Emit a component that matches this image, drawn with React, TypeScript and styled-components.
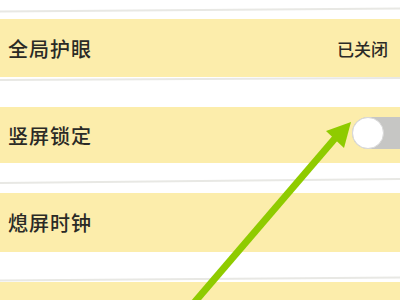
import React from "react"
import styled, { createGlobalStyle } from "styled-components"

const GlobalStyle = createGlobalStyle`
	html, body {
		margin: 0;
		padding: 0;
		background: #ffffff;
		font-family: "Noto Sans CJK SC", "Noto Sans", sans-serif;
	}
`

type Setting = {
	label: string
	height: number
	status?: string
	toggle?: boolean
}

const settings: Setting[] = [
	{ label: "全局护眼", height: 58, status: "已关闭" },
	{ label: "竖屏锁定", height: 56, toggle: true },
	{ label: "熄屏时钟", height: 59 },
	{ label: "", height: 30 },
]

const Page = styled.div`
	position: relative;
	width: 400px;
	height: 300px;
	overflow: hidden;
	background: #ffffff;
`

const Gap = styled.div<{ $h: number; $line: number; $tilt: number }>`
	position: relative;
	height: ${(p) => p.$h}px;
	&::after {
		content: "";
		position: absolute;
		left: -10px;
		right: -10px;
		top: ${(p) => p.$line}px;
		height: 2px;
		background: #e8e8e4;
		transform: rotate(${(p) => p.$tilt}deg);
	}
`

const Row = styled.div<{ $h: number }>`
	display: flex;
	align-items: center;
	justify-content: space-between;
	height: ${(p) => p.$h}px;
	padding: 0 0 0 8px;
	background: #fcedab;
`

const Label = styled.span`
	font-size: 20px;
	font-weight: 500;
	color: #2a2a26;
	letter-spacing: 1px;
`

const Status = styled.span`
	font-size: 17px;
	font-weight: 500;
	color: #2a2a26;
	margin-right: 12px;
`

const Track = styled.div`
	position: relative;
	width: 70px;
	height: 32px;
	margin-right: -22px;
	margin-top: -4px;
	border-radius: 16px;
	background: #c6c6c4;
`

const Knob = styled.div`
	position: absolute;
	left: 0;
	top: 0;
	width: 30px;
	height: 30px;
	border-radius: 50%;
	background: #ffffff;
	border: 1px solid #d8d8d8;
`

const Arrow = styled.svg`
	position: absolute;
	left: 0;
	top: 0;
	pointer-events: none;
`

const gaps = [
	{ h: 19, line: 9, tilt: -0.4 },
	{ h: 30, line: 1, tilt: -0.3 },
	{ h: 30, line: 17, tilt: -0.6 },
	{ h: 30, line: 26, tilt: -0.4 },
]

const App: React.FC = () => {
	return (
		<Page>
			<GlobalStyle />
			{settings.map((s, i) => (
				<React.Fragment key={i}>
					<Gap $h={gaps[i].h} $line={gaps[i].line} $tilt={gaps[i].tilt} />
					<Row $h={s.height}>
						<Label>{s.label}</Label>
						{s.status && <Status>{s.status}</Status>}
						{s.toggle && (
							<Track>
								<Knob />
							</Track>
						)}
					</Row>
				</React.Fragment>
			))}
			<Arrow width="400" height="300" viewBox="0 0 400 300">
				<line x1="193" y1="304" x2="337" y2="136" stroke="#8fcb00" strokeWidth="7" />
				<polygon points="351,122 326,131 344,148" fill="#8fcb00" />
			</Arrow>
		</Page>
	)
}

export default App
